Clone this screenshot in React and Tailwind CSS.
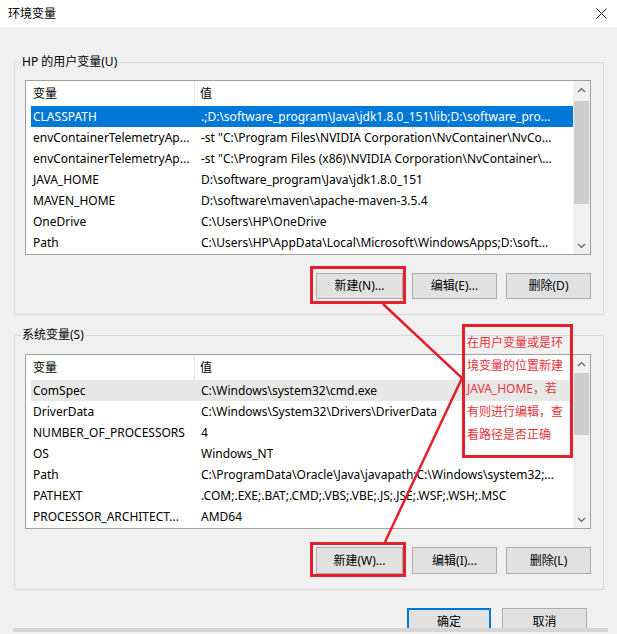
import React from "react";

const userVars = [
  ["CLASSPATH", ".;D:\\software_program\\Java\\jdk1.8.0_151\\lib;D:\\software_pro..."],
  ["envContainerTelemetryAp...", "-st \"C:\\Program Files\\NVIDIA Corporation\\NvContainer\\NvCo..."],
  ["envContainerTelemetryAp...", "-st \"C:\\Program Files (x86)\\NVIDIA Corporation\\NvContainer\\..."],
  ["JAVA_HOME", "D:\\software_program\\Java\\jdk1.8.0_151"],
  ["MAVEN_HOME", "D:\\software\\maven\\apache-maven-3.5.4"],
  ["OneDrive", "C:\\Users\\HP\\OneDrive"],
  ["Path", "C:\\Users\\HP\\AppData\\Local\\Microsoft\\WindowsApps;D:\\soft..."],
];

const sysVars = [
  ["ComSpec", "C:\\Windows\\system32\\cmd.exe"],
  ["DriverData", "C:\\Windows\\System32\\Drivers\\DriverData"],
  ["NUMBER_OF_PROCESSORS", "4"],
  ["OS", "Windows_NT"],
  ["Path", "C:\\ProgramData\\Oracle\\Java\\javapath;C:\\Windows\\system32;..."],
  ["PATHEXT", ".COM;.EXE;.BAT;.CMD;.VBS;.VBE;.JS;.JSE;.WSF;.WSH;.MSC"],
  ["PROCESSOR_ARCHITECT...", "AMD64"],
];

function Chevron({ up }) {
  return (
    <svg width="9" height="6" viewBox="0 0 9 6">
      <path
        d={up ? "M1 5 L4.5 1.5 L8 5" : "M1 1 L4.5 4.5 L8 1"}
        fill="none"
        stroke="#606060"
        strokeWidth="1.2"
      />
    </svg>
  );
}

function ListBox({ rows, selected, hovered, heightClass, thumbTop, thumbHeight }) {
  return (
    <div className={`flex border border-[#a0a0a0] bg-white ${heightClass}`}>
      <div className="flex min-w-0 flex-1 flex-col">
        <div className="flex h-[25px] shrink-0 items-center">
          <div className="flex h-full w-[169px] shrink-0 items-center border-r border-[#e5e5e5] pl-[7px]">变量</div>
          <div className="pl-[5px]">值</div>
        </div>
        {rows.map(([k, v], i) => (
          <div
            key={i}
            className={`ml-[5px] flex h-[21px] shrink-0 items-center whitespace-nowrap ${
              i === selected ? "bg-[#0078d7] text-white" : i === hovered ? "bg-[#e8e8e8]" : ""
            }`}
          >
            <div className="w-[164px] shrink-0 overflow-hidden pl-[2px]">{k}</div>
            <div className="min-w-0 overflow-hidden pl-[6px]">{v}</div>
          </div>
        ))}
      </div>
      <div className="flex w-[17px] shrink-0 flex-col bg-[#f0f0f0]">
        <div className="flex h-[17px] shrink-0 items-center justify-center">
          <Chevron up />
        </div>
        <div className="flex-1">
          <div className={`mx-[1px] bg-[#cdcdcd] ${thumbTop} ${thumbHeight}`} />
        </div>
        <div className="flex h-[17px] shrink-0 items-center justify-center">
          <Chevron />
        </div>
      </div>
    </div>
  );
}

function Btn({ children, w }) {
  return (
    <div className={`flex h-full items-center justify-center border border-[#adadad] bg-[#e1e1e1] ${w}`}>
      {children}
    </div>
  );
}

export default function App() {
  return (
    <div className="relative h-[634px] w-[617px] overflow-hidden bg-[#f0f0f0] font-['Noto_Sans','Noto_Sans_CJK_SC',sans-serif] text-[12px] leading-[16px] text-black">
      {/* title bar */}
      <div className="flex h-[27px] items-center justify-between bg-white pl-[8px] pr-[10px]">
        <span>环境变量</span>
        <svg width="11" height="11" viewBox="0 0 11 11">
          <path d="M0.5 0.5 L10.5 10.5 M10.5 0.5 L0.5 10.5" stroke="#222" strokeWidth="1" />
        </svg>
      </div>

      <div className="pl-[14px] pr-[13px]">
        {/* user variables */}
        <fieldset className="mt-[27px] border border-[#d9d9d9] p-0">
          <legend className="ml-[6px] px-[1px] leading-[16px]">HP 的用户变量(U)</legend>
          <div className="pl-[10px] pr-[12px] pt-[10px] pb-[15px]">
            <ListBox
              rows={userVars}
              selected={0}
              hovered={-1}
              heightClass="h-[175px]"
              thumbTop="mt-[3px]"
              thumbHeight="h-[103px]"
            />
            <div className="mt-[18px] flex h-[26px] justify-end gap-[9px]">
              <Btn w="w-[87px]">新建(N)...</Btn>
              <Btn w="w-[85px]">编辑(E)...</Btn>
              <Btn w="w-[85px]">删除(D)</Btn>
            </div>
          </div>
        </fieldset>

        {/* system variables */}
        <fieldset className="mt-[12px] border border-[#d9d9d9] p-0">
          <legend className="ml-[6px] px-[1px] leading-[16px]">系统变量(S)</legend>
          <div className="pl-[10px] pr-[12px] pt-[11px] pb-[15px]">
            <ListBox
              rows={sysVars}
              selected={-1}
              hovered={0}
              heightClass="h-[175px]"
              thumbTop="mt-[1px]"
              thumbHeight="h-[62px]"
            />
            <div className="mt-[18px] flex h-[27px] justify-end gap-[9px]">
              <Btn w="w-[87px]">新建(W)...</Btn>
              <Btn w="w-[85px]">编辑(I)...</Btn>
              <Btn w="w-[85px]">删除(L)</Btn>
            </div>
          </div>
        </fieldset>

        {/* OK / Cancel */}
        <div className="mt-[18px] flex h-[20px] items-start justify-end gap-[11px] overflow-hidden pr-[17px]">
          <div className="flex h-[26px] w-[84px] items-center justify-center border-2 border-[#0078d7] bg-[#e1e1e1] pt-[1px]">
            确定
          </div>
          <div className="flex h-[26px] w-[85px] items-center justify-center border border-[#adadad] bg-[#e1e1e1] pt-[1px]">
            取消
          </div>
        </div>
      </div>
      <div className="ml-[13px] h-[4px] w-[595px] bg-[#d6d6d6]" />

      {/* annotation overlay */}
      <svg className="pointer-events-none absolute left-0 top-0" width="617" height="634" viewBox="0 0 617 634">
        <rect x="311.5" y="267.5" width="93" height="35" fill="none" stroke="#e3202c" strokeWidth="3" />
        <rect x="311.5" y="543.5" width="93" height="32" fill="none" stroke="#e3202c" strokeWidth="3" />
        <path d="M383 304 L462 378 L385 542" fill="none" stroke="#e3202c" strokeWidth="2.5" />
      </svg>
      <div className="pointer-events-none absolute left-[462px] top-[324px] h-[134px] w-[111px] whitespace-nowrap border-[3px] border-[#e3202c] pl-[2px] pt-[4px] text-[12px] leading-[23px] text-[#e3343c]">
        在用户变量或是环
        <br />
        境变量的位置新建
        <br />
        JAVA_HOME，若
        <br />
        有则进行编辑，查
        <br />
        看路径是否正确
      </div>
    </div>
  );
}
